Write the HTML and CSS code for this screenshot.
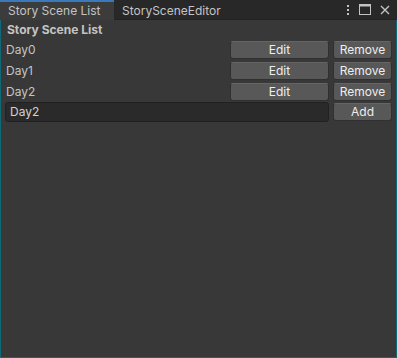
FILE: index.html
```html
<!DOCTYPE html>
<html lang="en">
<head>
    <meta charset="UTF-8">
    <title>Story Scene List</title>
    <link rel="stylesheet" href="styles.css">
</head>
<body>
    <div class="window">
        <div class="tabbar">
            <div class="tab active">Story Scene List</div>
            <div class="tab">StorySceneEditor</div>
            <div class="tab-tools">
                <svg width="4" height="12" viewBox="0 0 4 12"><rect x="1" y="1" width="2" height="2" fill="#c4c4c4"/><rect x="1" y="5" width="2" height="2" fill="#c4c4c4"/><rect x="1" y="9" width="2" height="2" fill="#c4c4c4"/></svg>
                <svg width="12" height="11" viewBox="0 0 12 11"><rect x="0.5" y="0.5" width="11" height="10" fill="none" stroke="#c4c4c4"/><rect x="0.5" y="0.5" width="11" height="2" fill="#c4c4c4"/></svg>
                <svg width="10" height="10" viewBox="0 0 10 10"><path d="M1 1 L9 9 M9 1 L1 9" stroke="#c4c4c4" stroke-width="1.4"/></svg>
            </div>
        </div>
        <div class="content">
            <div class="title">Story Scene List</div>
            <div class="row">
                <div class="label">Day0</div>
                <button class="btn edit">Edit</button>
                <button class="btn side">Remove</button>
            </div>
            <div class="row">
                <div class="label">Day1</div>
                <button class="btn edit">Edit</button>
                <button class="btn side">Remove</button>
            </div>
            <div class="row">
                <div class="label">Day2</div>
                <button class="btn edit">Edit</button>
                <button class="btn side">Remove</button>
            </div>
            <div class="row add-row">
                <div class="field">Day2</div>
                <button class="btn side">Add</button>
            </div>
        </div>
    </div>
</body>
</html>
```

FILE: styles.css
```css
body {
    margin: 0;
    padding: 0;
    font-family: Inter, 'Noto Sans', sans-serif;
    font-size: 12px;
    background-color: #383838;
    color: #c4c4c4;
}

.window {
    display: flex;
    flex-direction: column;
    width: 397px;
    height: 358px;
}

.tabbar {
    display: flex;
    align-items: stretch;
    height: 20px;
    background-color: #282828;
    border-bottom: 1px solid #232323;
    box-sizing: border-box;
}

.tab {
    padding: 2px 8px 0 8px;
    line-height: 17px;
    color: #c4c4c4;
}

.tab.active {
    width: 98px;
    background-color: #3c3c3c;
    border-top: 2px solid #3a79bb;
    padding-top: 0;
    margin-bottom: -1px;
}

.tab-tools {
    margin-left: auto;
    display: flex;
    align-items: center;
    gap: 9px;
    padding-right: 7px;
}

.content {
    flex-grow: 1;
    border: 1px solid #0f6a78;
    border-top: none;
    padding: 0 4px 0 4px;
}

.title {
    font-weight: bold;
    height: 19px;
    line-height: 19px;
    padding-left: 2px;
}

.row {
    display: flex;
    align-items: center;
    height: 21px;
    gap: 4px;
}

.add-row {
    margin-top: -1px;
}

.label {
    flex-grow: 1;
    padding-left: 1px;
}

.btn {
    height: 18px;
    padding: 0;
    font-family: Inter, 'Noto Sans', sans-serif;
    font-size: 12px;
    color: #eeeeee;
    background-color: #585858;
    border: 1px solid #303030;
    border-top-color: #656565;
    border-radius: 3px;
}

.btn.edit {
    width: 99px;
}

.btn.side {
    width: 59px;
}

.field {
    flex-grow: 1;
    height: 20px;
    line-height: 18px;
    box-sizing: border-box;
    padding-left: 4px;
    background-color: #2a2a2a;
    border: 1px solid #212121;
    border-radius: 3px;
    color: #d2d2d2;
}
```
